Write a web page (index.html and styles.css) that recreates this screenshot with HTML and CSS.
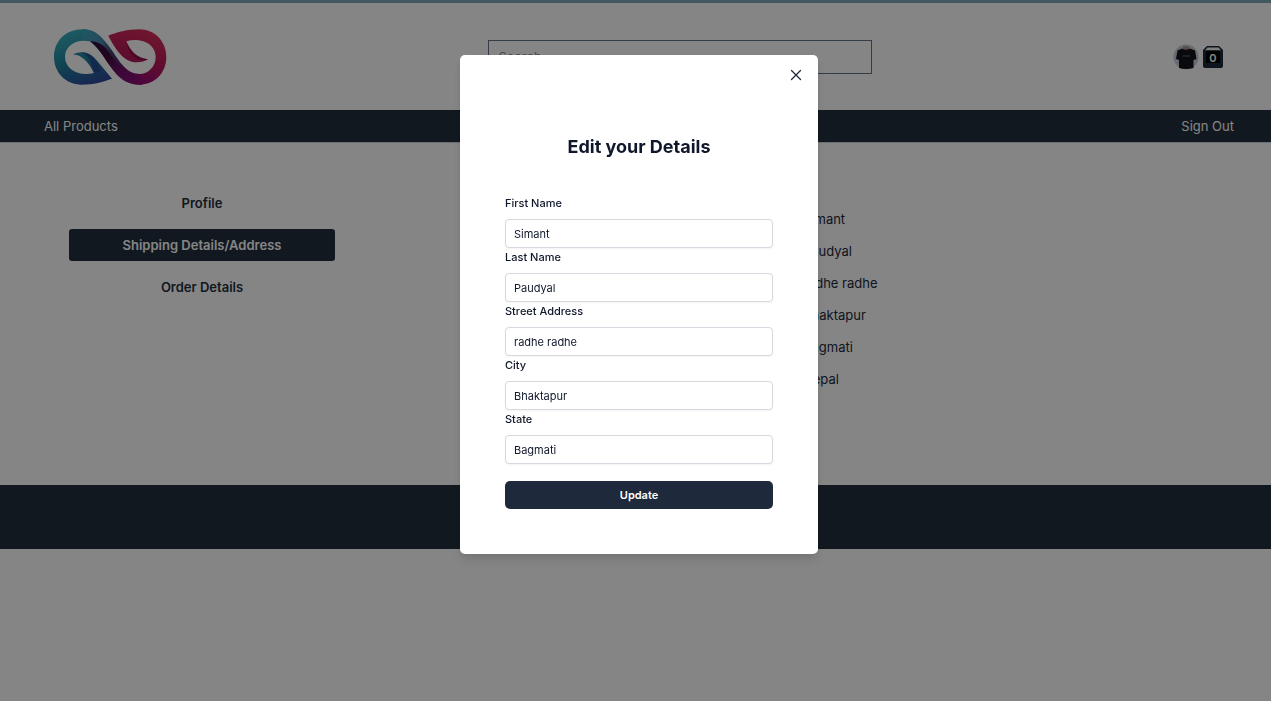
FILE: index.html
```html
<!DOCTYPE html>
<html lang="en">
<head>
<meta charset="utf-8">
<meta name="viewport" content="width=device-width, initial-scale=1">
<title>Shipping Details</title>
<link rel="stylesheet" href="styles.css">
</head>
<body>
<header class="header">
  <a class="logo" href="#" aria-label="Home">
    <svg class="logo-mark" viewBox="-18 81 456 180" aria-hidden="true">
      <defs>
        <linearGradient id="ring-left" x1="0.4" y1="0" x2="0.8" y2="1">
          <stop offset="0" stop-color="#38aebb"/>
          <stop offset="0.5" stop-color="#20809c"/>
          <stop offset="1" stop-color="#31429a"/>
        </linearGradient>
        <linearGradient id="band" gradientUnits="userSpaceOnUse" x1="110" y1="95" x2="300" y2="255">
          <stop offset="0" stop-color="#38aebb"/>
          <stop offset="0.3" stop-color="#4a8cb0"/>
          <stop offset="0.48" stop-color="#38406f"/>
          <stop offset="0.7" stop-color="#6d126c"/>
          <stop offset="1" stop-color="#930c78"/>
        </linearGradient>
        <linearGradient id="ring-right" gradientUnits="userSpaceOnUse" x1="330" y1="95" x2="275" y2="255">
          <stop offset="0" stop-color="#d62d5a"/>
          <stop offset="0.5" stop-color="#b81a58"/>
          <stop offset="1" stop-color="#8c0c7a"/>
        </linearGradient>
        <linearGradient id="fold" gradientUnits="userSpaceOnUse" x1="160" y1="125" x2="250" y2="240">
          <stop offset="0" stop-color="#2b1244"/>
          <stop offset="0.45" stop-color="#450535"/>
          <stop offset="1" stop-color="#8b0d78" stop-opacity="0"/>
        </linearGradient>
      </defs>
      <path fill="url(#ring-left)" d="M128 88C75 88 42 125 42 171C42 218 78 254 125 254C160 254 190 245 216 236L172 183C150 155 125 151 98 163C125 165 145 185 162 219C115 230 75 208 75 170C75 140 105 115 150 124L170 100Q150 88 128 88Z"/>
      <path fill="url(#ring-right)" d="M298 254C345 254 379 218 379 171C379 125 345 88 298 88C260 88 232 97 205 107C225 145 250 187 290 187C305 187 315 184 324 178C290 175 270 150 259 124C300 112 347 130 347 171C347 200 325 222 298 222L285 221L265 247Q280 254 298 254Z"/>
      <path fill="url(#band)" d="M128 88C170 88 192 118 215 150C240 188 262 222 298 222L308 254C270 256 247 242 229 222C200 190 184 150 150 124Q136 119 125 120Z"/>
      <path fill="url(#fold)" d="M150 124C170 124 186 132 202 150C222 178 244 216 285 228L275 251C256 247 240 236 229 222C200 190 184 150 150 124Z"/>
      <path fill="#253b8e" opacity=".6" d="M122 156C150 167 156 194 162 219L182 216C175 181 151 155 122 156Z"/>
      <path fill="#7a0c40" opacity=".65" d="M259 124C268 154 292 175 324 178C288 190 262 158 259 124Z"/>
    </svg>
  </a>
  <input class="search" type="search" placeholder="Search..." aria-label="Search">
  <div class="account">
    <a class="account-link" href="#" aria-label="Your profile">
      <svg width="26" height="26" viewBox="0 0 26 26" aria-hidden="true">
        <circle cx="13" cy="13" r="12.5" fill="#c5ccd8"/>
        <path d="M10 2.500h6v4h-6z" fill="#a78d83"/>
        <path d="M9 4.500Q13 7 17 4.500L22 6.500L23.500 15L20.500 16V24Q13 26 6 24V16L3 15L4.500 6.500Z" fill="#10141a"/>
        <path d="M9.500 12h7.500" stroke="#5c6068" stroke-width="1"/>
      </svg>
    </a>
    <a class="account-link cart" href="#" aria-label="Cart, 0 items">
      <svg width="20" height="22" viewBox="0 0 20 22" aria-hidden="true">
        <path d="M4 0H16L20 4V20Q20 22 18 22H2Q0 22 0 20V4Z" fill="#1e293b"/>
        <path d="M4.500 1.500H15.500L18 4.500H2Z" fill="#f4f5f7"/>
        <path d="M3 4.500H17V17H3Z" fill="#000"/>
      </svg>
      <span class="cart-count">0</span>
    </a>
  </div>
</header>
<nav class="nav">
  <a class="nav-link" href="#">All Products</a>
  <a class="nav-link" href="#">Sign Out</a>
</nav>
<main class="main">
  <div class="tabs">
    <button class="tab" type="button">Profile</button>
    <button class="tab tab-active" type="button">Shipping Details/Address</button>
    <button class="tab" type="button">Order Details</button>
  </div>
  <ul class="details">
    <li>Simant</li>
    <li>Paudyal</li>
    <li>radhe radhe</li>
    <li>Bhaktapur</li>
    <li>Bagmati</li>
    <li>Nepal</li>
  </ul>
</main>
<footer class="footer"></footer>

<div class="overlay">
  <div class="modal" role="dialog" aria-modal="true" aria-labelledby="modal-title">
    <button class="close" type="button" aria-label="Close">
      <svg width="12" height="12" viewBox="0 0 12 12" aria-hidden="true"><path d="M1.500 1.500L10.500 10.500M10.500 1.500L1.500 10.500" stroke="#1e293b" stroke-width="1.300" stroke-linecap="round"/></svg>
    </button>
    <h1 class="modal-title" id="modal-title">Edit your Details</h1>
    <form class="form">
      <div class="field"><label for="first">First Name</label><input id="first" type="text" value="Simant"></div>
      <div class="field"><label for="last">Last Name</label><input id="last" type="text" value="Paudyal"></div>
      <div class="field"><label for="street">Street Address</label><input id="street" type="text" value="radhe radhe"></div>
      <div class="field"><label for="city">City</label><input id="city" type="text" value="Bhaktapur"></div>
      <div class="field"><label for="state">State</label><input id="state" type="text" value="Bagmati"></div>
      <button class="update" type="button">Update</button>
    </form>
  </div>
</div>
</body>
</html>
```
FILE: styles.css
```css
* { box-sizing: border-box; }

body {
  margin: 0;
  background: #fff;
  color: #232f3e;
  font: 13px/32px Inter, "Liberation Sans", sans-serif;
}

button, input { font: inherit; color: inherit; }
a { color: inherit; text-decoration: none; }
svg { display: block; }

.header {
  display: flex;
  align-items: center;
  justify-content: space-between;
  height: 110px;
  padding: 0 48px 0 34px;
  border-top: 3px solid #80a8bb;
}

.logo-mark { width: 152px; height: 60px; }

.search {
  width: 384px;
  height: 34px;
  padding: 0 10px;
  border: 1px solid #64748b;
  border-radius: 0;
  background: transparent;
}

.search::placeholder { color: #848b98; }

.account { display: flex; align-items: center; gap: 4px; }

.cart { position: relative; }

.cart-count {
  position: absolute;
  inset: 4px 0 0;
  color: #fff;
  font-size: 11px;
  font-weight: 600;
  line-height: 16px;
  text-align: center;
}

.nav {
  display: flex;
  justify-content: space-between;
  padding: 0 37px 0 44px;
  border-bottom: 1px solid #cbd5e1;
  background: #232f3e;
  color: #fff;
}

.main {
  display: grid;
  grid-template-columns: 266px 1fr;
  column-gap: 468px;
  min-height: 342px;
  padding: 44px 69px;
}

.tabs {
  display: flex;
  flex-direction: column;
  gap: 10px;
}

.tab {
  padding: 0;
  border: 0;
  border-radius: 3px;
  background: transparent;
  font-weight: 600;
}

.tab-active { background: #232f3e; color: #fff; }

.details {
  margin: 0;
  padding: 16px 0 0;
  list-style: none;
  color: #1e293b;
}

.footer { height: 64px; background: #232f3e; }

.overlay {
  position: fixed;
  inset: 0;
  display: flex;
  align-items: flex-start;
  justify-content: center;
  padding: 55px 0 0 7px;
  background: rgba(0, 0, 0, 0.48);
}

.modal {
  position: relative;
  width: 358px;
  padding: 80px 45px 45px;
  border-radius: 5px;
  background: #fff;
  box-shadow: 0 8px 12px rgba(0, 0, 0, 0.08), 0 3px 5px rgba(0, 0, 0, 0.06);
  color: #0f172a;
  font-size: 11px;
  line-height: 16px;
}

.close {
  position: absolute;
  top: 10px;
  right: 12px;
  padding: 4px;
  border: 0;
  background: transparent;
}

.modal-title {
  margin: 0 0 36px;
  font-size: 18px;
  font-weight: 700;
  line-height: 24px;
  text-align: center;
}

.form { display: grid; row-gap: 1px; }

.field { display: grid; row-gap: 8px; }

.field label { font-weight: 500; }

.field input {
  width: 100%;
  height: 29px;
  padding: 0 8px;
  border: 1px solid #d5d9e0;
  border-radius: 4px;
  background: #fff;
  box-shadow: 0 1px 2px rgba(0, 0, 0, 0.05);
}

.update {
  height: 28px;
  margin-top: 16px;
  padding: 0;
  border: 0;
  border-radius: 5px;
  background: #1e293b;
  color: #fff;
  font-weight: 600;
}
```
